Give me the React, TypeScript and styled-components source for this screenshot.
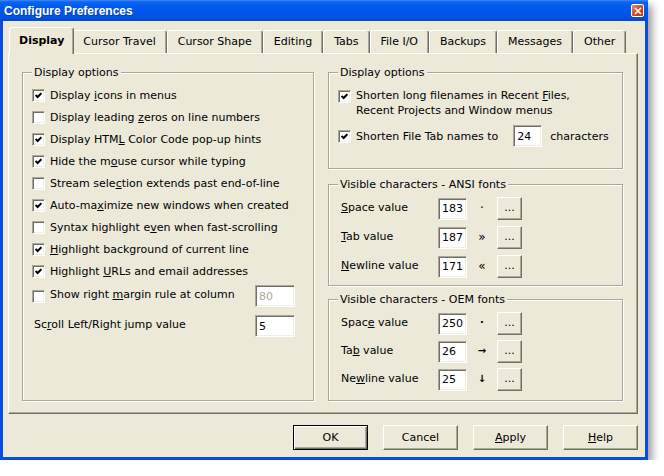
import React from 'react';
import styled, { createGlobalStyle, css } from 'styled-components';

const face = '#ECE9D8';
const shade = '#ACA899';
const dark = '#716F64';
const uiFont = '"DejaVu Sans", Verdana, sans-serif';

const GlobalStyle = createGlobalStyle`
    html, body {
        margin: 0;
        padding: 0;
        background: #ffffff;
    }
    body {
        font-family: ${uiFont};
        font-size: 11px;
        color: #000;
    }
    *, *::before, *::after {
        box-sizing: border-box;
    }
    u {
        text-decoration: underline;
        text-underline-offset: 1px;
    }
`;

interface IOption {
    readonly on: boolean;
    readonly label: React.ReactNode;
}

interface IValue {
    readonly label: React.ReactNode;
    readonly value: string;
    readonly glyph: string;
}

const tabs = ['Display', 'Cursor Travel', 'Cursor Shape', 'Editing', 'Tabs', 'File I/O', 'Backups', 'Messages', 'Other'];

const options: IOption[] = [
    { on: true, label: <>Display <u>i</u>cons in menus</> },
    { on: false, label: <>Display leading <u>z</u>eros on line numbers</> },
    { on: true, label: <>Display HTM<u>L</u> Color Code pop-up hints</> },
    { on: true, label: <>Hide the m<u>o</u>use cursor while typing</> },
    { on: false, label: <>Stream sele<u>c</u>tion extends past end-of-line</> },
    { on: true, label: <>Auto-ma<u>x</u>imize new windows when created</> },
    { on: false, label: <>Syntax highlight e<u>v</u>en when fast-scrolling</> },
    { on: true, label: <><u>H</u>ighlight background of current line</> },
    { on: true, label: <>Highlight <u>U</u>RLs and email addresses</> },
];

const ansi: IValue[] = [
    { label: <><u>S</u>pace value</>, value: '183', glyph: '·' },
    { label: <><u>T</u>ab value</>, value: '187', glyph: '»' },
    { label: <><u>N</u>ewline value</>, value: '171', glyph: '«' },
];

const oem: IValue[] = [
    { label: <>Spac<u>e</u> value</>, value: '250', glyph: '·' },
    { label: <>Ta<u>b</u> value</>, value: '26', glyph: '→' },
    { label: <>Ne<u>w</u>line value</>, value: '25', glyph: '↓' },
];

function CheckBox({ on }: { on: boolean }) {
    return (
        <Check>
            {on && (
                <svg width="7" height="7" viewBox="0 0 7 7">
                    <polyline points="0.6,3 2.6,5 6.4,1.2" fill="none" stroke="#000" strokeWidth="2" />
                </svg>
            )}
        </Check>
    );
}

export default function App() {
    return (
        <>
            <GlobalStyle />
            <Window>
                <TitleBar>
                    <Caption>Configure Preferences</Caption>
                    <CloseBox>
                        <svg width="8" height="8" viewBox="0 0 8 8">
                            <path d="M1 1L7 7M7 1L1 7" stroke="#fff" strokeWidth="1.7" />
                        </svg>
                    </CloseBox>
                </TitleBar>
                <Client>
                    <TabStrip>
                        {tabs.map((t, i) => (
                            <Tab key={t} $active={i === 0}>
                                {t}
                            </Tab>
                        ))}
                    </TabStrip>
                    <Panel>
                        <Group $pad="11px 18px 0 9px">
                            <GroupTitle>Display options</GroupTitle>
                            {options.map((o, i) => (
                                <CheckRow key={i}>
                                    <CheckBox on={o.on} />
                                    <span>{o.label}</span>
                                </CheckRow>
                            ))}
                            <CheckRow $gap={3}>
                                <CheckBox on={false} />
                                <Grow>
                                    Show right <u>m</u>argin rule at column
                                </Grow>
                                <Field $w={40} $disabled readOnly value="80" />
                            </CheckRow>
                            <CheckRow $gap={8}>
                                <Grow $indent={2}>
                                    Sc<u>r</u>oll Left/Right jump value
                                </Grow>
                                <Field $w={40} readOnly value="5" />
                            </CheckRow>
                        </Group>
                        <RightColumn>
                            <Group $pad="15px 10px 21px 9px">
                                <GroupTitle>Display options</GroupTitle>
                                <WrapRow>
                                    <CheckBox on />
                                    <span>
                                        Shorten long filenames in Recent <u>F</u>iles,
                                        <br />
                                        Recent Projects and Window menus
                                    </span>
                                </WrapRow>
                                <CheckRow $gap={7}>
                                    <CheckBox on />
                                    <span>Shorten File Tab names to</span>
                                    <TabWidth $w={29} readOnly value="24" />
                                    <span>characters</span>
                                </CheckRow>
                            </Group>
                            <Group $pad="12px 10px 8px 12px" $space={15}>
                                <GroupTitle>Visible characters - ANSI fonts</GroupTitle>
                                <ValueList $gap={7}>
                                    {ansi.map((v) => (
                                        <ValueRow key={v.value}>
                                            <span>{v.label}</span>
                                            <Field $w={29} readOnly value={v.value} />
                                            <Glyph>{v.glyph}</Glyph>
                                            <SmallButton>...</SmallButton>
                                        </ValueRow>
                                    ))}
                                </ValueList>
                            </Group>
                            <Group $pad="12px 10px 10px 12px" $space={13}>
                                <GroupTitle>Visible characters - OEM fonts</GroupTitle>
                                <ValueList $gap={6}>
                                    {oem.map((v) => (
                                        <ValueRow key={v.value}>
                                            <span>{v.label}</span>
                                            <Field $w={29} readOnly value={v.value} />
                                            <Glyph $oem>{v.glyph}</Glyph>
                                            <SmallButton>...</SmallButton>
                                        </ValueRow>
                                    ))}
                                </ValueList>
                            </Group>
                        </RightColumn>
                    </Panel>
                    <ButtonBar>
                        <PushButton $default>OK</PushButton>
                        <PushButton>Cancel</PushButton>
                        <PushButton>
                            <u>A</u>pply
                        </PushButton>
                        <PushButton>
                            <u>H</u>elp
                        </PushButton>
                    </ButtonBar>
                </Client>
            </Window>
        </>
    );
}

const Window = styled.div`
    width: 648px;
    height: 460px;
    display: flex;
    flex-direction: column;
    background: #0A4CDF;
    box-shadow: 4px 5px 8px rgba(0, 0, 0, 0.4);
`;

const TitleBar = styled.div`
    height: 21px;
    flex: none;
    display: flex;
    align-items: center;
    justify-content: space-between;
    padding: 0 4px 0 4px;
    background: linear-gradient(to bottom, #3C8CF8 0px, #0A62F2 2px, #0058EC 9px, #0052E2 17px, #0747CC 21px);
`;

const Caption = styled.span`
    font: bold 12px 'Liberation Sans', Arial, sans-serif;
    color: #fff;
    text-shadow: 1px 1px 0 rgba(10, 24, 131, 0.45);
`;

const CloseBox = styled.div`
    width: 13px;
    height: 13px;
    border: 1px solid #fff;
    border-radius: 2px;
    background: linear-gradient(135deg, #F08A68, #D9481F 50%, #B8350F);
    display: flex;
    align-items: center;
    justify-content: center;
`;

const Client = styled.div`
    flex: 1;
    margin: 0 3px 3px;
    background: ${face};
    padding: 6px 7px 7px 5px;
    display: flex;
    flex-direction: column;
`;

const TabStrip = styled.div`
    height: 26px;
    flex: none;
    display: flex;
    align-items: flex-end;
    padding-left: 3px;
    position: relative;
    z-index: 1;
`;

const Tab = styled.div<{ $active?: boolean }>`
    height: 23px;
    padding: 0 10px 1px;
    display: flex;
    align-items: center;
    background: ${face};
    border-top: 1px solid #fff;
    border-left: 1px solid #fff;
    border-right: 1px solid ${dark};
    box-shadow: inset -1px 0 0 ${shade};
    border-radius: 3px 3px 0 0;
    white-space: nowrap;

    ${({ $active }) =>
        $active &&
        css`
            height: 27px;
            margin: 0 -2px -1px -2px;
            padding: 0 9px 1px;
            font-weight: bold;
            position: relative;
            z-index: 2;
        `}
`;

const Panel = styled.div`
    height: 361px;
    flex: none;
    border: 1px solid;
    border-color: #fff ${dark} ${dark} #fff;
    box-shadow: inset -1px -1px 0 ${shade};
    display: grid;
    grid-template-columns: 292px 295px;
    column-gap: 14px;
    padding: 18px 0 12px 13px;
`;

const RightColumn = styled.div`
    display: flex;
    flex-direction: column;
`;

const Group = styled.div<{ $pad: string; $space?: number }>`
    position: relative;
    padding: ${({ $pad }) => $pad};
    margin-top: ${({ $space }) => $space || 0}px;
    border: 1px solid ${shade};
    box-shadow: inset 1px 1px 0 #fff, 1px 1px 0 #fff;
`;

const GroupTitle = styled.span`
    position: absolute;
    top: -7px;
    left: 9px;
    padding: 0 2px;
    line-height: 13px;
    background: ${face};
`;

const CheckRow = styled.div<{ $gap?: number }>`
    display: flex;
    align-items: center;
    height: 22px;
    margin-top: ${({ $gap }) => $gap || 0}px;
    white-space: nowrap;
    > span:nth-child(2) {
        margin-left: 5px;
    }
`;

const WrapRow = styled.div`
    display: flex;
    align-items: flex-start;
    line-height: 15px;
    > span:nth-child(2) {
        margin-left: 5px;
    }
    > :first-child {
        margin-top: 2px;
    }
`;

const Grow = styled.span<{ $indent?: number }>`
    flex: 1;
    padding-left: ${({ $indent }) => $indent || 0}px;
    padding-bottom: 3px;
`;

const Check = styled.span`
    width: 13px;
    height: 13px;
    flex: none;
    background: #fff;
    border: 1px solid;
    border-color: ${shade} #fff #fff ${shade};
    box-shadow: inset 1px 1px 0 ${dark}, inset -1px -1px 0 #F1EFE2;
    display: flex;
    align-items: center;
    justify-content: center;
`;

const Field = styled.input<{ $w: number; $disabled?: boolean }>`
    width: ${({ $w }) => $w}px;
    height: 22px;
    flex: none;
    margin: 0;
    padding: 0 0 0 3px;
    font: 11px ${uiFont};
    color: ${({ $disabled }) => ($disabled ? shade : '#000')};
    background: #fff;
    border: 1px solid;
    border-color: ${shade} #fff #fff ${shade};
    box-shadow: inset 1px 1px 0 ${dark}, inset -1px -1px 0 #F1EFE2;
    outline: none;
`;

const TabWidth = styled(Field)`
    margin: 0 8px 0 15px;
`;

const ValueList = styled.div<{ $gap: number }>`
    display: flex;
    flex-direction: column;
    gap: ${({ $gap }) => $gap}px;
`;

const ValueRow = styled.div`
    display: grid;
    grid-template-columns: 97px 29px 30px 25px;
    align-items: center;
    height: 22px;
    white-space: nowrap;
    > span:first-child {
        padding-bottom: 2px;
    }
`;

const Glyph = styled.span<{ $oem?: boolean }>`
    text-align: center;
    font-size: ${({ $oem }) => ($oem ? '10px' : '12px')};
    font-weight: ${({ $oem }) => ($oem ? 'bold' : 'normal')};
    padding-bottom: 2px;
`;

const raised = css`
    background: ${face};
    color: #000;
    font: 11px ${uiFont};
    padding: 0;
    border: 1px solid;
    border-color: #fff ${dark} ${dark} #fff;
    box-shadow: inset -1px -1px 0 ${shade};
`;

const SmallButton = styled.button`
    ${raised};
    width: 25px;
    height: 23px;
    padding-bottom: 3px;
`;

const ButtonBar = styled.div`
    display: flex;
    justify-content: flex-end;
    gap: 15px;
    margin-top: 11px;
`;

const PushButton = styled.button<{ $default?: boolean }>`
    ${raised};
    width: 75px;
    height: 25px;

    ${({ $default }) =>
        $default &&
        css`
            border-color: #000;
            box-shadow: inset 1px 1px 0 #fff, inset -1px -1px 0 ${dark}, inset -2px -2px 0 ${shade};
        `}
`;
